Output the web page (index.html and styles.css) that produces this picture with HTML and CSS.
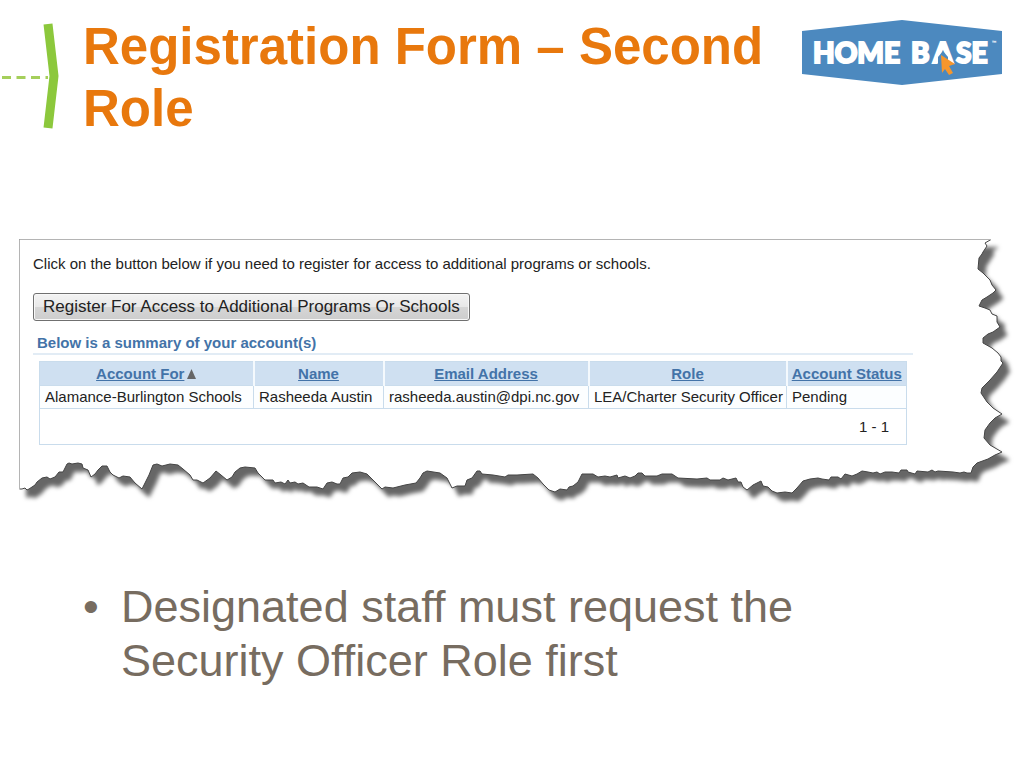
FILE: index.html
```
<!DOCTYPE html>
<html lang="en">

<head>
  <meta charset="UTF-8" />
  <meta name="viewport" content="width=device-width, initial-scale=1.0" />
  <title>Registration Form – Second Role</title>
  <link rel="stylesheet" href="styles.css">
</head>

<body>

  <header class="slide-header">
    <svg class="marker" viewBox="0 0 60 110" aria-hidden="true">
      <path d="M2 57.500H48" stroke="#a5cf5b" stroke-width="3" stroke-dasharray="9 5.500" />
      <path d="M48 4L54 56L48 108" fill="none" stroke="#8cc83c" stroke-width="9" stroke-linejoin="bevel" />
    </svg>

    <h1>Registration Form – Second Role</h1>

    <svg class="logo" viewBox="0 0 200 66" role="img" aria-label="Home Base">
      <path d="M0 11L100 0L200 11V54L100 65L0 54Z" fill="#4c89bf" />
      <g class="logo-text">
        <text x="11" y="43">HOME</text>
        <text x="109" y="43">B</text>
        <text x="131" y="43">A</text>
        <text x="154" y="43">SE</text>
        <text class="tm" x="190" y="25">™</text>
      </g>
      <!-- house opening inside the A -->
      <path d="M136 46V37L141 31L146 37V46Z" fill="#4c89bf" />
      <path d="M139 35L153 44L147 46L151 53L147 55L143 49L140 53Z" fill="#f6962c" />
    </svg>
  </header>

  <main>
    <section class="torn-panel">
      <!-- torn paper -->
      <svg class="paper" viewBox="0 0 1005 272" preserveAspectRatio="none" aria-hidden="true">
        <g transform="translate(-19 -238)">
          <path class="sheet" d="M19.500 239.500H991L985 243L987 246L983 252L982 254L979 258L978 269L983 273L990 280L992 285L996 290L993 293L987 297L982 300L979 306L985 308L990 310L992 314L997 316L997 322L1000 327L993 332L988 334L983 338L983 343L992 348L998 353L1001 357L1001 361L1003 363L997 372L990 380L982 388L981 393L987 402L993 408L1002 414L995 418L990 423L985 430L984 438L990 445L1002 452
            L995 455L988 459L977 463L973 467L971 473L967 473L964 472L960 473L953 472L938 471L935 472L932 470L928 472L917 471L915 474L908 472L907 470L901 470L899 473L892 472L885 472L880 474L877 472L873 473L868 472L862 471L857 474L852 476L845 474L841 479L838 477L831 477L829 480L822 479L818 478L810 479L803 481L797 488L792 493L785 492L777 493L772 491L768 487L763 486L761 481
            L753 485L747 490L743 487L741 482L738 482L736 478L728 480L723 478L720 480L710 480L707 478L697 479L678 478L672 474L662 474L657 476L645 476L642 473L638 473L635 476L630 478L625 476L618 478L617 475L610 477L605 476L598 477L593 474L582 474L578 482L573 486L569 487L567 490L560 489L555 492L549 490L543 484L538 478L533 474
            L517 475L508 475L505 477L493 475L482 474L480 471L477 471L472 478L467 480L465 486L457 486L452 488L447 478L440 473L427 471L423 473L420 478L416 483L405 485L393 488L385 487L382 489L375 482L367 474L360 472L352 473L348 477L343 478L340 484L337 484L332 482L327 483L323 489L317 487L309 487L303 483L298 484L295 482L290 483L288 480L285 484L281 482L275 483L273 480L265 480
            L258 473L255 468L245 467L240 468L235 472L232 477L227 480L221 475L216 471L210 478L203 483L197 480L193 480L190 475L183 469L178 465L170 464L162 466L157 464L153 465L149 475L145 483L142 489L135 483L130 477L123 476L119 478L113 475L110 472L107 466L102 466L98 470L95 474L91 477L88 470L83 468L82 464L78 463L72 464L69 463L67 464L63 472L59 472L55 477L50 479L47 477L42 478L37 482L35 485L32 487L29 489L27 490L25 488L22 489L19.500 489Z" />
          <path class="sheet-edge" d="M19.500 489V239.500H991" />
        </g>
      </svg>

      <div class="panel-content">
        <p>Click on the button below if you need to register for access to additional programs or schools.</p>
        <button type="button" class="btn-register">Register For Access to Additional Programs Or Schools</button>
        <h2>Below is a summary of your account(s)</h2>

        <table>
          <colgroup>
            <col class="col-account">
            <col class="col-name">
            <col class="col-email">
            <col class="col-role">
            <col class="col-status">
          </colgroup>
          <thead>
            <tr>
              <th><a href="#">Account For</a><svg class="sort" viewBox="0 0 9 10" aria-hidden="true"><path d="M4.500 0L9 10H0Z" /></svg></th>
              <th><a href="#">Name</a></th>
              <th><a href="#">Email Address</a></th>
              <th><a href="#">Role</a></th>
              <th><a href="#">Account Status</a></th>
            </tr>
          </thead>
          <tbody>
            <tr>
              <td>Alamance-Burlington Schools</td>
              <td>Rasheeda Austin</td>
              <td>rasheeda.austin@dpi.nc.gov</td>
              <td>LEA/Charter Security Officer</td>
              <td>Pending</td>
            </tr>
          </tbody>
          <tfoot>
            <tr>
              <td colspan="5">1 - 1</td>
            </tr>
          </tfoot>
        </table>
      </div>
    </section>

    <ul class="notes">
      <li>Designated staff must request the Security Officer Role first</li>
    </ul>
  </main>

</body>

</html>
```
FILE: styles.css
```
* {
  box-sizing: border-box;
}

body {
  margin: 0;
  background: #fff;
  font-family: "Liberation Sans", Arial, sans-serif;
}

.slide-header {
  display: flex;
  align-items: flex-start;
  padding: 16px 22px 0 0;
  min-height: 238px;
}

.marker {
  width: 60px;
  height: 110px;
  margin: 4px 23px 0 0;
  flex: none;
}

h1 {
  flex: 1;
  margin: 0;
  font-size: 51px;
  line-height: 62px;
  color: #e8780d;
}

.logo {
  width: 200px;
  height: 66px;
  margin-top: 4px;
  flex: none;
}

.logo-text {
  font-family: Lato, sans-serif;
  font-weight: 900;
  font-size: 28px;
  fill: #fff;
  stroke: #fff;
  stroke-width: 2;
}

.logo-text .tm {
  font-size: 6px;
  stroke: none;
}

.torn-panel {
  display: grid;
  margin-left: 19px;
}

.paper,
.panel-content {
  grid-area: 1 / 1;
}

.paper {
  width: 100%;
  height: 272px;
}

.sheet {
  fill: #fff;
  stroke: #444;
  stroke-width: 1;
  filter: drop-shadow(7px 8px 2px rgba(0, 0, 0, 0.6));
}

.sheet-edge {
  fill: none;
  stroke: #b4b4b4;
  stroke-width: 1;
}

.panel-content {
  padding: 16px 111px 0 14px;
  z-index: 1;
}

.panel-content p {
  margin: 0 0 19px;
  font-size: 15px;
  line-height: 20px;
  color: #222;
}

.btn-register {
  display: block;
  height: 28px;
  padding: 0 9px;
  border: 1px solid #707070;
  border-radius: 3px;
  background: linear-gradient(#f3f3f3, #e8e8e8 50%, #d6d6d6 50%, #cdcdcd);
  box-shadow: inset 0 0 0 1px #f8f8f8;
  font-family: inherit;
  font-size: 17px;
  color: #222;
}

h2 {
  margin: 12px 0 6px;
  padding-left: 4px;
  border-bottom: 2px solid #e2ecf5;
  font-size: 15px;
  line-height: 20px;
  color: #4373a8;
}

table {
  width: 868px;
  max-width: 100%;
  margin-left: 6px;
  table-layout: fixed;
  border-collapse: collapse;
  border: 1px solid #c9dcec;
  font-size: 15px;
  line-height: 22px;
  white-space: nowrap;
  color: #222;
}

.col-account {
  width: 214px;
}

.col-name {
  width: 130px;
}

.col-email {
  width: 205px;
}

.col-role {
  width: 198px;
}

th {
  padding: 1px 0 0;
  background: #cfe0f1;
  border-right: 2px solid #f4f9fd;
}

th:last-child {
  border-right: none;
}

th a {
  color: #4373a8;
}

.sort {
  width: 9px;
  height: 10px;
  margin-left: 3px;
  fill: #666;
}

td {
  padding: 0 5px;
  border: 1px solid #c9dcec;
  background: #fcfeff;
}

tfoot td {
  height: 36px;
  padding-right: 17px;
  text-align: right;
  background: #fff;
}

.notes {
  margin: 70px 80px 0 83px;
  padding: 0;
  list-style: none;
  font-size: 45px;
  line-height: 54px;
  color: #776c60;
}

.notes li {
  display: flex;
}

.notes li::before {
  content: "•";
  flex: none;
  width: 38px;
}
```
